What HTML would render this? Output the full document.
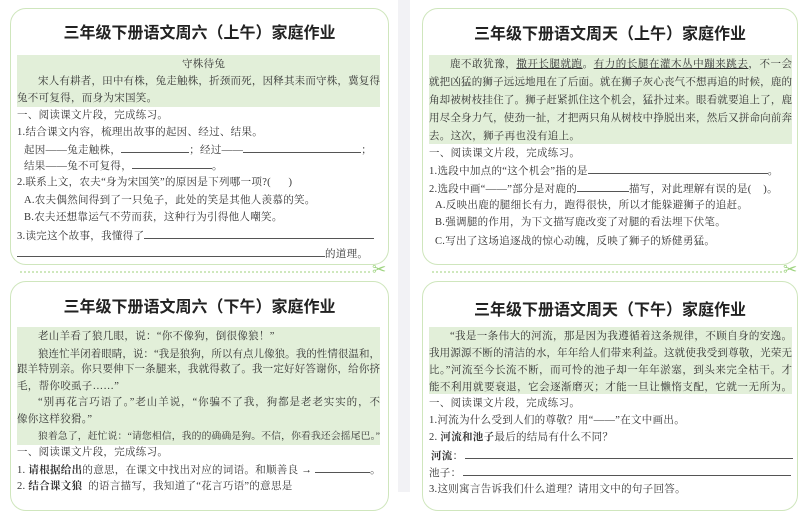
<!DOCTYPE html>
<html><head><meta charset="utf-8"><style>
*{margin:0;padding:0;box-sizing:border-box}
body{width:800px;height:492px;overflow:hidden;background:#fff;position:relative;font-family:"Liberation Serif","Noto Serif CJK SC",serif;color:#333}
.card{position:absolute;border:1.5px solid #cfe6bd;border-radius:16px;background:#fff}
.t{position:absolute;font-family:"Liberation Sans","Noto Sans CJK SC",sans-serif;font-weight:bold;font-size:16px;color:#222;white-space:nowrap;text-align:center}
.g{position:absolute;background:#e2efd9}
.l{position:absolute;font-size:10.5px;white-space:nowrap;line-height:14px;letter-spacing:0.3px}
.j{white-space:normal;text-align:justify;text-align-last:justify;letter-spacing:0;overflow:hidden;height:14px}
.u{display:inline-block;border-bottom:1px solid #555;height:10px;vertical-align:baseline}
.dash{position:absolute;border-top:2px dotted #cfe8bd;height:0}
.sc{position:absolute;color:#9dd37e;font-size:17px;font-family:"DejaVu Sans",sans-serif}
</style></head><body>
<div style="position:absolute;left:398px;top:0;width:12px;height:492px;background:#f2f2f5"></div>

<!-- left top -->
<div class="card" style="left:10px;top:8px;width:379px;height:257px"></div>
<div class="t" style="left:10px;width:379px;top:19px">三年级下册语文周六（上午）家庭作业</div>
<div class="g" style="left:17px;top:55px;width:363px;height:52px"></div>
<div class="l" style="left:182px;top:58px">守株待兔</div>
<div class="l j" style="left:38px;top:75px;width:342px">宋人有耕者，田中有株，兔走触株，折颈而死，因释其耒而守株，冀复得兔，</div>
<div class="l" style="left:17px;top:92px">兔不可复得，而身为宋国笑。</div>
<div class="l" style="left:17px;top:109px">一、阅读课文片段，完成练习。</div>
<div class="l" style="left:17px;top:126px">1.结合课文内容，梳理出故事的起因、经过、结果。</div>
<div class="l" style="left:24px;top:143px">起因——兔走触株，<span class="u" style="width:68px"></span>；经过——<span class="u" style="width:118px"></span>；</div>
<div class="l" style="left:24px;top:159px">结果——兔不可复得，<span class="u" style="width:80px"></span>。</div>
<div class="l" style="left:17px;top:176px">2.联系上文，农夫“身为宋国笑”的原因是下列哪一项?(&nbsp;&nbsp;&nbsp;&nbsp;&nbsp;&nbsp;)</div>
<div class="l" style="left:24px;top:194px">A.农夫偶然间得到了一只兔子，此处的笑是其他人羡慕的笑。</div>
<div class="l" style="left:24px;top:211px">B.农夫还想靠运气不劳而获，这种行为引得他人嘲笑。</div>
<div class="l" style="left:17px;top:229px">3.读完这个故事，我懂得了<span class="u" style="width:230px"></span></div>
<div class="l" style="left:17px;top:247px"><span class="u" style="width:308px"></span>的道理。</div>

<div class="dash" style="left:20px;top:271px;width:350px"></div>
<div class="sc" style="left:372px;top:260px">✂</div>
<div class="dash" style="left:432px;top:271px;width:350px"></div>
<div class="sc" style="left:783px;top:260px">✂</div>

<!-- left bottom -->
<div class="card" style="left:10px;top:281px;width:379px;height:230px"></div>
<div class="t" style="left:10px;width:379px;top:293px">三年级下册语文周六（下午）家庭作业</div>
<div class="g" style="left:17px;top:327px;width:363px;height:118px"></div>
<div class="l" style="left:38px;top:330px">老山羊看了狼几眼，说：“你不像狗，倒很像狼！”</div>
<div class="l j" style="left:38px;top:348px;width:342px">狼连忙半闭着眼睛，说：“我是狼狗，所以有点儿像狼。我的性情很温和，</div>
<div class="l j" style="left:17px;top:363px;width:363px">跟羊特别亲。你只要伸下一条腿来，我就得救了。我一定好好答谢你，给你挤</div>
<div class="l" style="left:17px;top:380px">毛，帮你咬虱子……”</div>
<div class="l j" style="left:38px;top:396px;width:342px">“别再花言巧语了。”老山羊说，“你骗不了我，狗都是老老实实的，不</div>
<div class="l" style="left:17px;top:413px">像你这样狡猾。”</div>
<div class="l j" style="left:38px;top:430px;width:342px;font-size:9.8px">狼着急了，赶忙说：“请您相信，我的的确确是狗。不信，你看我还会摇尾巴。”</div>
<div class="l" style="left:17px;top:446px">一、阅读课文片段，完成练习。</div>
<div class="l" style="left:17px;top:463px">1. <b>请根据给出</b>的意思，在课文中找出对应的词语。和顺善良 → <span class="u" style="width:55px"></span>。</div>
<div class="l" style="left:17px;top:480px">2. <b>结合课文狼</b>&nbsp;&nbsp;的语言描写，我知道了“花言巧语”的意思是</div>

<!-- right top -->
<div class="card" style="left:422px;top:8px;width:376px;height:257px"></div>
<div class="t" style="left:422px;width:376px;top:20px">三年级下册语文周天（上午）家庭作业</div>
<div class="g" style="left:429px;top:55px;width:363px;height:89px"></div>
<div class="l j" style="left:450px;top:58px;width:342px">鹿不敢犹豫，<u>撒开长腿就跑</u>。<u>有力的长腿在灌木丛中蹦来跳去</u>，不一会儿，</div>
<div class="l j" style="left:429px;top:76px;width:363px">就把凶猛的狮子远远地甩在了后面。就在狮子灰心丧气不想再追的时候，鹿的</div>
<div class="l j" style="left:429px;top:94px;width:363px">角却被树枝挂住了。狮子赶紧抓住这个机会，猛扑过来。眼看就要追上了，鹿</div>
<div class="l j" style="left:429px;top:112px;width:363px">用尽全身力气，使劲一扯，才把两只角从树枝中挣脱出来，然后又拼命向前奔</div>
<div class="l" style="left:429px;top:130px">去。这次，狮子再也没有追上。</div>
<div class="l" style="left:429px;top:147px">一、阅读课文片段，完成练习。</div>
<div class="l" style="left:429px;top:164px">1.选段中加点的“这个机会”指的是<span class="u" style="width:180px"></span>。</div>
<div class="l" style="left:429px;top:182px">2.选段中画“——”部分是对鹿的<span class="u" style="width:52px"></span>描写，对此理解有误的是(&nbsp;&nbsp;&nbsp;&nbsp;)。</div>
<div class="l" style="left:435px;top:199px">A.反映出鹿的腿细长有力，跑得很快，所以才能躲避狮子的追赶。</div>
<div class="l" style="left:435px;top:216px">B.强调腿的作用，为下文描写鹿改变了对腿的看法埋下伏笔。</div>
<div class="l" style="left:435px;top:235px">C.写出了这场追逐战的惊心动魄，反映了狮子的矫健勇猛。</div>

<!-- right bottom -->
<div class="card" style="left:422px;top:281px;width:376px;height:230px"></div>
<div class="t" style="left:422px;width:376px;top:296px">三年级下册语文周天（下午）家庭作业</div>
<div class="g" style="left:429px;top:327px;width:363px;height:67px"></div>
<div class="l j" style="left:450px;top:330px;width:342px">“我是一条伟大的河流，那是因为我遵循着这条规律，不顾自身的安逸。</div>
<div class="l j" style="left:429px;top:347px;width:363px">我用源源不断的清洁的水，年年给人们带来利益。这就使我受到尊敬，光荣无</div>
<div class="l j" style="left:429px;top:364px;width:363px">比。”河流至今长流不断，而可怜的池子却一年年淤塞，到头来完全枯干。才</div>
<div class="l j" style="left:429px;top:381px;width:363px">能不利用就要衰退，它会逐渐磨灭；才能一旦让懒惰支配，它就一无所为。</div>
<div class="l" style="left:429px;top:397px">一、阅读课文片段，完成练习。</div>
<div class="l" style="left:429px;top:414px">1.河流为什么受到人们的尊敬？用“——”在文中画出。</div>
<div class="l" style="left:429px;top:431px">2. <b>河流和池子</b>最后的结局有什么不同？</div>
<div class="l" style="left:431px;top:449px"><b>河流</b>：<span class="u" style="width:328px;margin-left:2px"></span></div>
<div class="l" style="left:429px;top:466px">池子：<span class="u" style="width:328px;margin-left:2px"></span></div>
<div class="l" style="left:429px;top:483px">3.这则寓言告诉我们什么道理？请用文中的句子回答。</div>
</body></html>
